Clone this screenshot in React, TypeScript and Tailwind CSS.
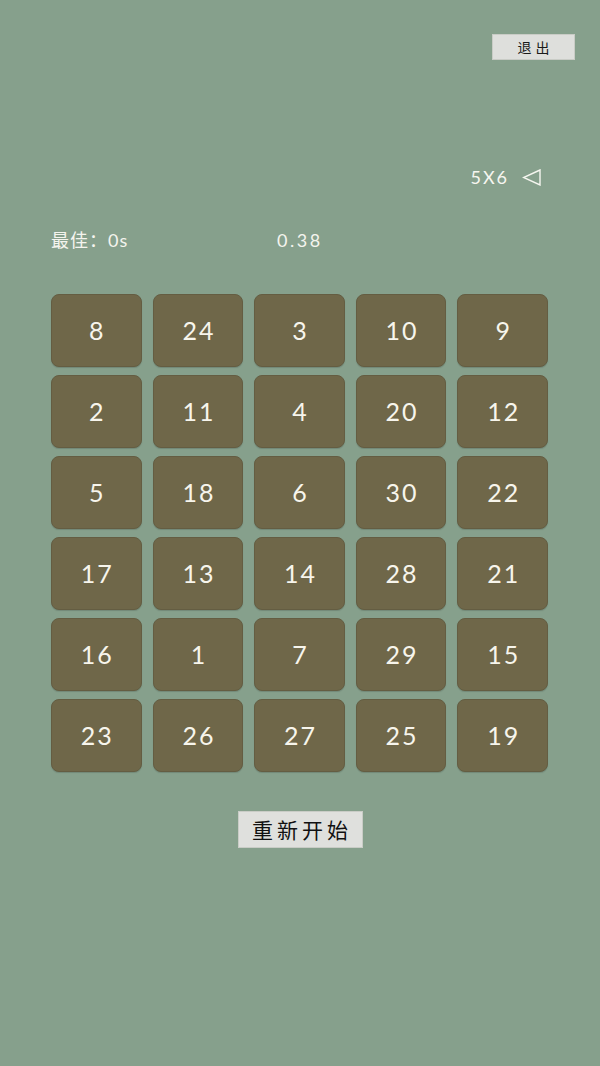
import React from "react";

const tiles = [8, 24, 3, 10, 9, 2, 11, 4, 20, 12, 5, 18, 6, 30, 22, 17, 13, 14, 28, 21, 16, 1, 7, 29, 15, 23, 26, 27, 25, 19];

export default function App() {
  return (
    <div
      className="w-[600px] h-[1066px] bg-[#86a08c] flex flex-col"
      style={{ fontFamily: '"Lato", "Noto Sans CJK SC", sans-serif' }}
    >
      {/* Exit */}
      <div className="flex justify-end pt-[34px] pr-[25px]">
        <button className="w-[83px] h-[26px] pl-[4px] bg-[#dedfdc] border border-[#c9ccc6] text-[14px] tracking-[4px] text-[#1a1a1a] flex items-center justify-center">
          退出
        </button>
      </div>

      {/* Size selector */}
      <div className="flex justify-end items-center gap-[13px] pr-[59px] mt-[107px] h-[20px] text-[#f6f6f0]">
        <span className="text-[18px] tracking-[2px]">5X6</span>
        <svg width="19" height="17" viewBox="0 0 19 17" fill="none">
          <path d="M18 1 L1.5 8.5 L18 16 Z" stroke="#f6f6f0" strokeWidth="1.4" strokeLinejoin="miter" />
        </svg>
      </div>

      {/* Stats */}
      <div className="flex items-center pl-[51px] mt-[43px] h-[20px] text-[#f4f4ee] text-[18px]">
        <span className="w-[226px] tracking-[1px]">最佳：0s</span>
        <span className="tracking-[2.5px]">0.38</span>
      </div>

      {/* Board */}
      <div className="ml-[51px] mt-[44px] w-[497px] grid grid-cols-5 gap-x-[11px] gap-y-[8px]">
        {tiles.map((n) => (
          <div
            key={n}
            className="h-[73px] pl-[2px] rounded-[8px] bg-[#6f6749] border border-[#645d42] shadow-[0_1px_1px_rgba(0,0,0,0.15)] flex items-center justify-center text-[25px] tracking-[2px] text-[#f7f5ec]"
          >
            {n}
          </div>
        ))}
      </div>

      {/* Restart */}
      <div className="flex justify-center mt-[39px]">
        <button className="w-[125px] h-[37px] pl-[4px] bg-[#dfe0dd] border border-[#c9ccc6] text-[21px] tracking-[4px] text-[#111] flex items-center justify-center">
          重新开始
        </button>
      </div>
    </div>
  );
}
